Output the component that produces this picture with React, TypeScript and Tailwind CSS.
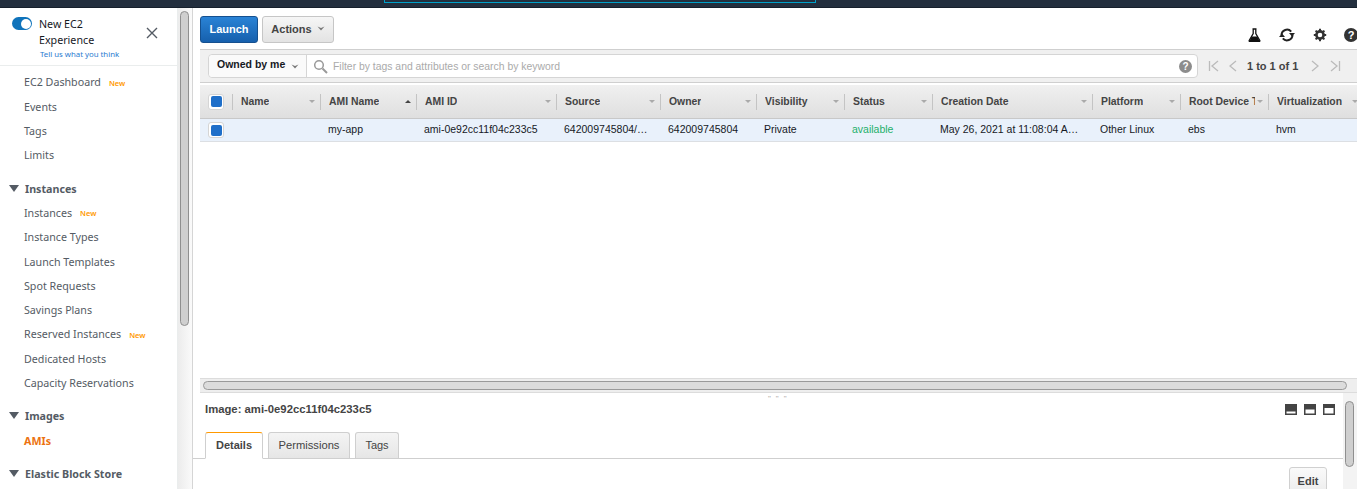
import React from "react";

const Ember = "font-['Noto_Sans',sans-serif]";

function New() {
  return <span className="ml-[8px] text-[7.5px] font-semibold text-[#ff9900] relative top-[1px]">New</span>;
}
function Item({ t, n, active }: { t: string; n?: boolean; active?: boolean }) {
  return (
    <div className={`h-[24.3px] pl-[24px] flex items-center text-[10.7px] whitespace-nowrap ${active ? "text-[#ec7211] font-bold" : "text-[#545b64]"}`}>
      {t}
      {n && <New />}
    </div>
  );
}
function Group({ t }: { t: string }) {
  return (
    <div className="h-[24.3px] flex items-center text-[10.7px] font-bold text-[#545b64] whitespace-nowrap">
      <svg width="13" height="8" viewBox="0 0 13 8" className="ml-[8px] mr-[4px]"><path d="M1 0h10L6 7z" fill="#545b64" /></svg>
      {t}
    </div>
  );
}
function Sort({ up }: { up?: boolean }) {
  return (
    <svg width="8" height="5" viewBox="0 0 8 5" className="shrink-0">
      {up ? <path d="M1 4h6L4 1z" fill="#444" /> : <path d="M1 1h6L4 4z" fill="#aaa" />}
    </svg>
  );
}
const cols: [string, number][] = [
  ["Name", 88], ["AMI Name", 96], ["AMI ID", 140], ["Source", 104], ["Owner", 96], ["Visibility", 88],
  ["Status", 88], ["Creation Date", 160], ["Platform", 88], ["Root Device Type", 88], ["Virtualization", 95],
];
const cells = ["", "my-app", "ami-0e92cc11f04c233c5", "642009745804/…", "642009745804", "Private", "available", "May 26, 2021 at 11:08:04 A…", "Other Linux", "ebs", "hvm"];

function Check() {
  return (
    <div className="w-[16px] h-[16px] rounded-[3px] border border-[#d5d5d5] bg-white flex items-center justify-center">
      <div className="w-[11px] h-[11px] rounded-[2px] bg-[#1f6fc9]" />
    </div>
  );
}

export default function App() {
  return (
    <div className="w-[1357px] h-[489px] overflow-hidden bg-white flex flex-col font-['Liberation_Sans',sans-serif]">
      <div className="h-[8px] shrink-0 bg-[#232f3e] flex border-b border-[#16202c]">
        <div className="ml-[384px] w-[432px] h-[3px] border-x border-b border-[#00a1c9]" />
      </div>
      <div className="flex-1 flex min-h-0">
        <aside className={`w-[178px] shrink-0 border-r border-[#eaeded] ${Ember}`}>
          <div className="h-[58px] border-b border-[#eaeded] relative pl-[39px] pt-[8px]">
            <div className="absolute left-[12px] top-[9px] w-[20px] h-[13px] rounded-full bg-[#0f73bb] flex items-center justify-end pr-[1px]">
              <div className="w-[10px] h-[10px] rounded-full bg-white" />
            </div>
            <div className="text-[10.7px] leading-[16px] text-[#16191f]">New EC2<br />Experience</div>
            <div className="absolute left-[40px] top-[41px] text-[7.8px] text-[#2b7bd0] whitespace-nowrap">Tell us what you think</div>
            <svg width="12" height="12" viewBox="0 0 12 12" className="absolute left-[146px] top-[19px]"><path d="M1 1l10 10M11 1L1 11" stroke="#545b64" strokeWidth="1.4" /></svg>
          </div>
          <div className="pt-[4.3px]">
            <Item t="EC2 Dashboard" n />
            <Item t="Events" />
            <Item t="Tags" />
            <Item t="Limits" />
            <div className="h-[9px]" />
            <Group t="Instances" />
            <Item t="Instances" n />
            <Item t="Instance Types" />
            <Item t="Launch Templates" />
            <Item t="Spot Requests" />
            <Item t="Savings Plans" />
            <Item t="Reserved Instances" n />
            <Item t="Dedicated Hosts" />
            <Item t="Capacity Reservations" />
            <div className="h-[9px]" />
            <Group t="Images" />
            <Item t="AMIs" active />
            <div className="h-[9px]" />
            <Group t="Elastic Block Store" />
          </div>
        </aside>
        <div className="w-[15px] shrink-0 bg-gradient-to-r from-[#ececec] to-[#fafafa] border-r border-[#d5d5d5] pl-[2px] pt-[3px]">
          <div className="w-[9px] h-[315px] rounded-full bg-[#cfcfcf] border border-[#8f8f8f]" />
        </div>
        <main className="flex-1 min-w-0 flex flex-col text-[#444]">
          <div className="h-[41px] shrink-0 flex items-center pl-[7px] gap-[4px] relative">
            <button className="w-[58px] h-[27px] rounded-[3px] border border-[#15508f] bg-gradient-to-b from-[#2a83d6] to-[#1660ad] text-white text-[11px] font-bold mt-[1px]">Launch</button>
            <button className="w-[72px] h-[27px] rounded-[3px] border border-[#c6c6c6] bg-gradient-to-b from-[#f6f6f6] to-[#e3e3e3] text-[#444] text-[11px] font-bold flex items-center justify-center gap-[5px] mt-[1px]">
              Actions
              <svg width="8" height="5" viewBox="0 0 8 5" className="mb-[1px]"><path d="M0.5 0.5L4 4.5 7.5 0.5 4 2z" fill="#777" /></svg>
            </button>
            <div className="ml-auto flex items-center gap-[17px] mt-[13px] translate-x-[1px]">
              <svg width="13" height="14" viewBox="0 0 13 14"><path d="M4.5 1h4M5.2 1v4.5L1.2 12.5c-.2.5 0 1 .6 1h9.4c.6 0 .8-.5.6-1L7.8 5.5V1" fill="none" stroke="#111" strokeWidth="1.3" /><path d="M3.6 8.5h5.8l2.1 4.5h-10z" fill="#111" /></svg>
              <svg width="18" height="14" viewBox="0 0 18 14"><path d="M3.5 7a5.5 5.5 0 0 1 9.7-3.4M14.5 7a5.5 5.5 0 0 1-9.7 3.4" fill="none" stroke="#222" strokeWidth="2" /><path d="M11 5h6l-3 3.5zM7 9H1l3-3.5z" fill="#222" /></svg>
              <svg width="14" height="14" viewBox="0 0 14 14"><circle cx="7" cy="7" r="3.6" fill="none" stroke="#333" strokeWidth="2.6" /><path d="M7 .8v2.4M7 10.8v2.4M.8 7h2.4M10.8 7h2.4M2.6 2.6l1.7 1.7M9.7 9.7l1.7 1.7M11.4 2.6L9.7 4.3M4.3 9.7l-1.7 1.7" stroke="#333" strokeWidth="2" /></svg>
              <div className="w-[14px] h-[14px] rounded-full bg-[#333] text-white text-[11px] font-bold flex items-center justify-center">?</div>
            </div>
          </div>
          <div className="h-[34px] shrink-0 ml-[7px] border-y border-[#cfcfcf] bg-[#f0f0f0] flex items-center pl-[8px]">
            <div className="flex-1 h-[24px] max-w-[990px] bg-white border border-[#d5d5d5] rounded-[4px] flex items-center text-[10.5px]">
              <div className="w-[98px] h-full flex items-center pl-[8px] pb-[2px] gap-[6px] border-r border-[#d5d5d5] font-bold text-[#16191f] shrink-0 bg-[#fafafa] rounded-l-[4px]">
                Owned by me
                <svg width="8" height="5" viewBox="0 0 8 5" className="mt-[2px]"><path d="M0.5 0.5L4 4.5 7.5 0.5 4 2z" fill="#777" /></svg>
              </div>
              <svg width="15" height="15" viewBox="0 0 15 15" className="ml-[6px] mr-[5px] shrink-0"><circle cx="6" cy="6" r="4.3" fill="none" stroke="#999" strokeWidth="1.5" /><path d="M9.5 9.5L14 14" stroke="#999" strokeWidth="2" /></svg>
              <span className="text-[#aaa] text-[10.4px] pt-[1px]">Filter by tags and attributes or search by keyword</span>
              <div className="ml-auto mr-[5px] w-[13px] h-[13px] rounded-full bg-[#8c8c8c] text-white text-[10px] font-bold flex items-center justify-center">?</div>
            </div>
            <div className="ml-[10px] w-[147px] flex items-center text-[#444] text-[11px] font-bold shrink-0">
              <svg width="12" height="12" viewBox="0 0 12 12" className="mr-[9px]"><path d="M1.5 1v10M10 1L4 6l6 5" fill="none" stroke="#bbb" strokeWidth="1.3" /></svg>
              <svg width="8" height="12" viewBox="0 0 8 12" className="mr-[10px]"><path d="M7 1L1 6l6 5" fill="none" stroke="#bbb" strokeWidth="1.3" /></svg>
              1 to 1 of 1
              <svg width="8" height="12" viewBox="0 0 8 12" className="ml-[13px]"><path d="M1 1l6 5-6 5" fill="none" stroke="#bbb" strokeWidth="1.3" /></svg>
              <svg width="12" height="12" viewBox="0 0 12 12" className="ml-[10px]"><path d="M10.5 1v10M2 1l6 5-6 5" fill="none" stroke="#bbb" strokeWidth="1.3" /></svg>
            </div>
          </div>
          <div className="h-[34px] mt-[2px] shrink-0 ml-[7px] flex border-b border-[#c8c8c8] bg-gradient-to-b from-[#f0f0f0] to-[#dfdfdf] text-[10.4px] font-bold overflow-hidden">
            <div className="w-[32px] shrink-0 flex items-center pl-[8px]"><Check /></div>
            {cols.map(([c, w], i) => (
              <div key={c} style={{ width: w }} className="relative shrink-0 flex items-center justify-between gap-[1px] pl-[9px] pr-[4px]">
                <div className="absolute left-0 top-[9px] h-[16px] w-px bg-[#c4c4c4]" />
                <span className="whitespace-nowrap overflow-hidden min-w-0">{c}</span>
                <Sort up={i === 1} />
              </div>
            ))}
          </div>
          <div className="h-[23px] shrink-0 ml-[7px] flex items-center bg-[#e9f1fb] border-b border-[#dcdfe3] text-[10.5px] text-[#16191f] overflow-hidden">
            <div className="w-[32px] shrink-0 pl-[8px]"><Check /></div>
            {cols.map(([c, w], i) => (
              <div key={c} style={{ width: w }} className={`shrink-0 pl-[8px] whitespace-nowrap ${i === 6 ? "text-[#1eb06a]" : ""}`}>{cells[i]}</div>
            ))}
          </div>
          <div className="flex-1" />
          <div className="h-[15px] shrink-0 ml-[7px] bg-[#eeeeee] border-y border-[#dcdcdc] flex items-center px-[3px]">
            <div className="w-[1144px] h-[9px] rounded-full bg-[#dcdcdc] border border-[#9a9a9a]" />
          </div>
          <div className="h-[96px] shrink-0 flex relative">
            <div className="absolute left-[575px] top-[2px] text-[8px] leading-none tracking-[5px] text-[#aaa]">"""</div>
            <div className="flex-1 min-w-0 flex flex-col pt-[9px]">
              <div className="flex items-center pl-[12px] pr-[8px] h-[14px]">
                <span className="text-[11.3px] font-bold text-[#444]">Image: ami-0e92cc11f04c233c5</span>
                <div className="ml-auto flex gap-[7px]">
                  <svg width="12" height="11"><rect width="12" height="11" fill="#444" /><rect x="1.5" y="7.5" width="9" height="2" fill="#fff" /></svg>
                  <svg width="12" height="11"><rect width="12" height="11" fill="#444" /><rect x="1.5" y="5.5" width="9" height="4" fill="#fff" /></svg>
                  <svg width="12" height="11"><rect width="12" height="11" fill="#444" /><rect x="1.5" y="4" width="9" height="5.5" fill="#fff" /></svg>
                </div>
              </div>
              <div className="mt-[16px] h-[27px] flex items-end gap-[5px] pl-[12px] border-b border-[#cfcfcf] text-[11px] shrink-0">
                <div className="w-[58px] h-[27px] -mb-px bg-white border border-[#cfcfcf] border-t-[#ff9900] border-b-white rounded-t-[3px] flex items-center justify-center font-bold text-[#444]">Details</div>
                <div className="w-[82px] h-[26px] text-[11.2px] bg-gradient-to-b from-[#f4f4f4] to-[#e6e6e6] border border-[#cfcfcf] border-b-0 rounded-t-[3px] flex items-center justify-center">Permissions</div>
                <div className="w-[44px] h-[26px] bg-gradient-to-b from-[#f4f4f4] to-[#e6e6e6] border border-[#cfcfcf] border-b-0 rounded-t-[3px] flex items-center justify-center">Tags</div>
              </div>
              <div className="flex justify-end pr-[16px] pt-[8px]">
                <div className="w-[38px] h-[28px] border border-[#d0d0d0] rounded-[3px] bg-gradient-to-b from-[#fafafa] to-[#ececec] text-[11px] font-bold flex items-center justify-center">Edit</div>
              </div>
            </div>
            <div className="w-[14px] shrink-0 bg-[#f3f3f3] pl-[2px] pt-[8px]">
              <div className="w-[9px] h-[66px] rounded-full bg-[#cfcfcf] border border-[#8f8f8f]" />
            </div>
          </div>
        </main>
      </div>
    </div>
  );
}
